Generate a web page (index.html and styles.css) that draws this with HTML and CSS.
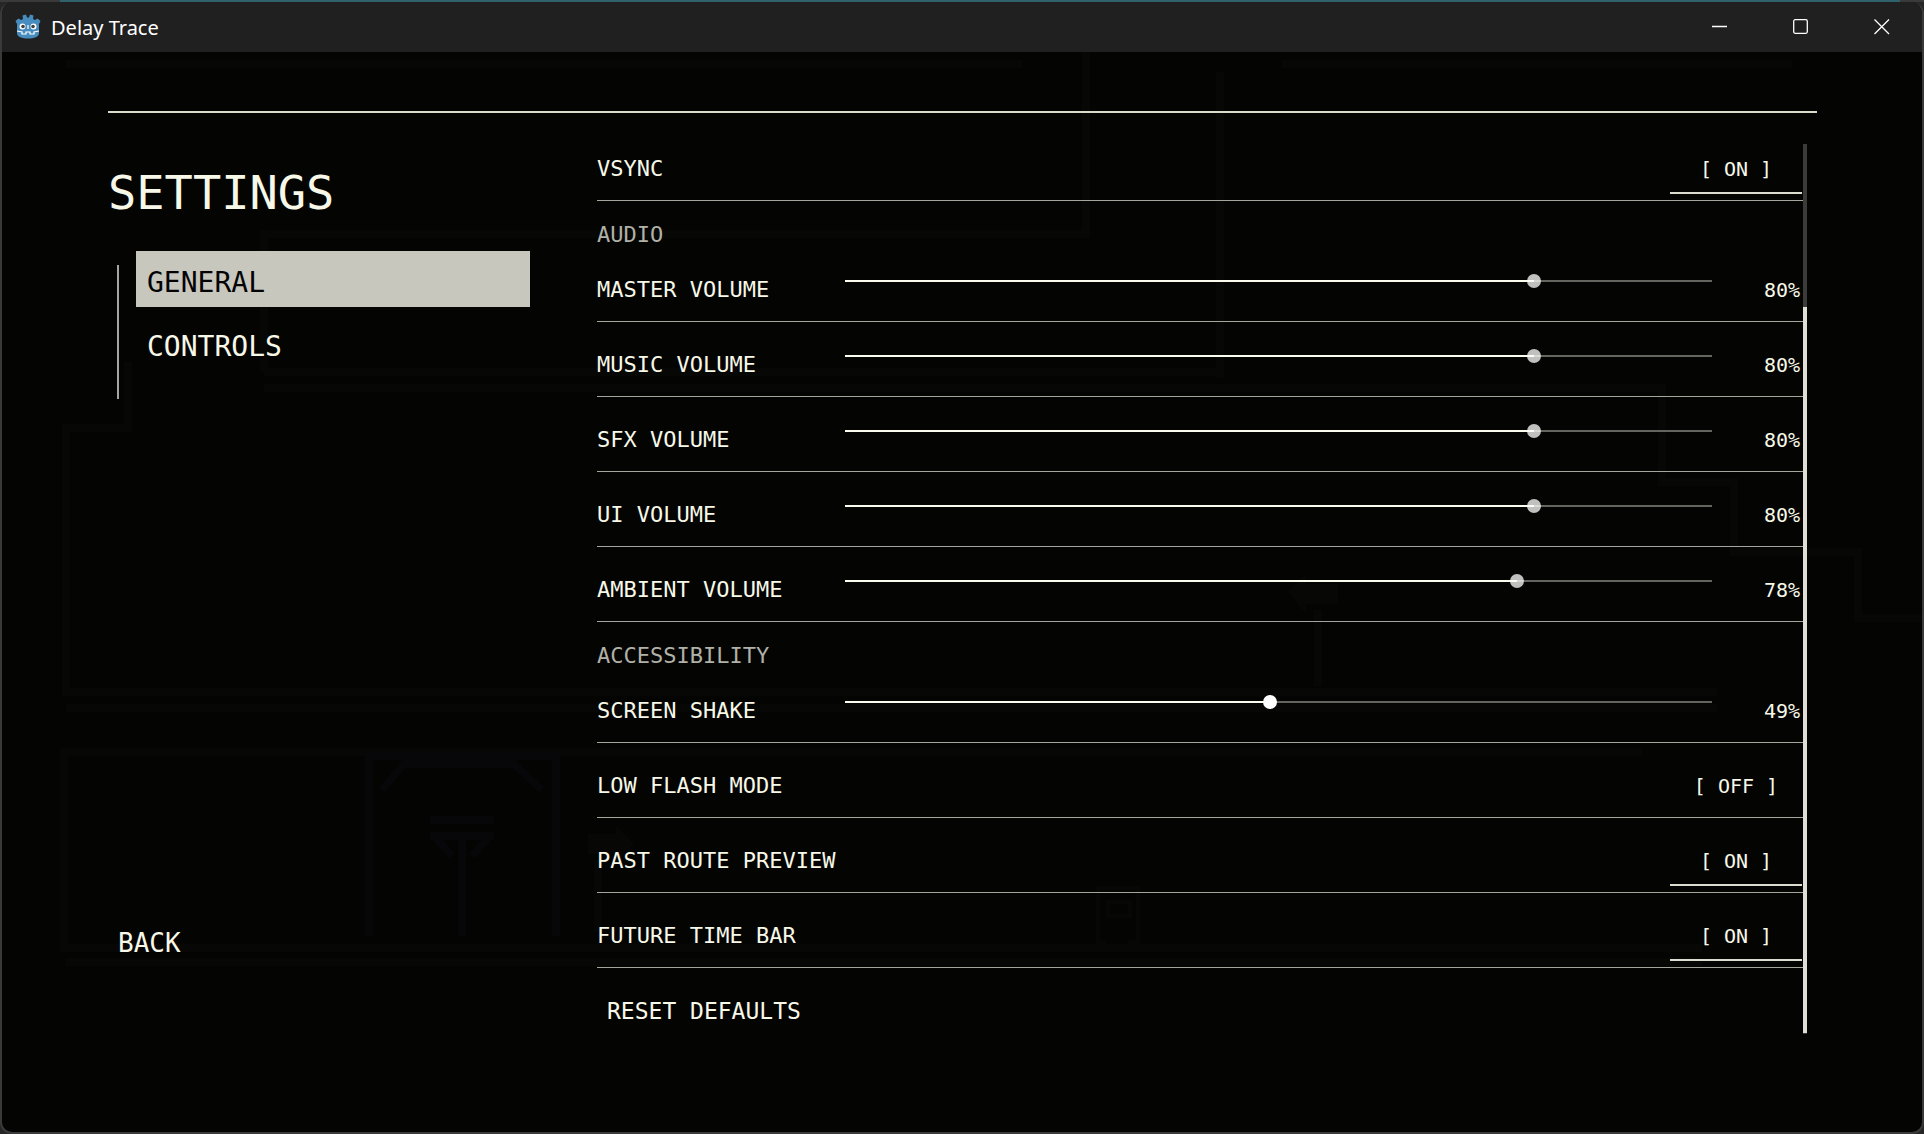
FILE: index.html
```html
<!DOCTYPE html>
<html lang="en">
<head>
<meta charset="utf-8">
<title>Delay Trace</title>
<link rel="stylesheet" href="styles.css">
</head>
<body>
<div class="window">
  <header class="titlebar">
    <svg class="logo" viewBox="0 0 26 26" aria-hidden="true">
      <path fill="#478cbf" d="M.5 7l3-2.500 2.500 1.500 2-1-.5-3.500L11 .5l1 3h2l1-3 3.500 1L18 5l2 1 2.500-1.500 3 2.500-1.500 3v9c0 4-5 5.500-11 5.500S2 23 2 19v-9z"/>
      <path fill="none" stroke="#fff" stroke-width="1.200" d="M2 17l5 1v2h4v-2h4v2h4v-2l5-1M13 11v4"/>
      <circle cx="7.500" cy="12.500" r="3" fill="#fff"/><circle cx="18.500" cy="12.500" r="3" fill="#fff"/>
      <circle cx="8" cy="12.500" r="1.800" fill="#414042"/><circle cx="18" cy="12.500" r="1.800" fill="#414042"/>
    </svg>
    <span class="app-name">Delay Trace</span>
    <div class="window-buttons">
      <button type="button" aria-label="Minimize"><svg viewBox="0 0 16 16"><path d="M0 7.500h15"/></svg></button>
      <button type="button" aria-label="Maximize"><svg viewBox="0 0 16 16"><rect x=".7" y=".7" width="13.600" height="13.600" rx="1.500"/></svg></button>
      <button type="button" aria-label="Close"><svg viewBox="0 0 16 16"><path d="M.5.5l14.500 14.500M15 .5L.5 15"/></svg></button>
    </div>
  </header>
  <div class="game">
    <svg class="level" viewBox="0 0 1920 1080" preserveAspectRatio="xMidYMin slice" aria-hidden="true">
      <g fill="none" stroke="#070706" stroke-width="8">
        <path d="M64 12H1020M1280 12H1790M1084 0V182H262V320M1218 20V326M262 320H1218M262 336H1660V430H1732V500H1856V566H1920"/>
        <path d="M126 310V376H64V640H1715M64 656H1715M62 900V700H1640M64 896H1700M64 910H1700"/>
        <path d="M1316 558V634M596 808V880"/>
      </g>
      <g fill="none" stroke="#07070a" stroke-width="8">
        <path d="M367 884V704H554V884M380 738L402 712H512L540 738M428 768H492M428 784H492M460 784V884M434 786L450 804M486 786L470 804"/>
      </g>
      <path fill="#070706" d="M1286 540l18-18v10h32v20h-32v10zM586 782h28v-8l18 18-18 18v-8h-28z"/>
      <path fill="none" stroke="#070706" stroke-width="4" d="M1096 836h40v54h-8v6h-26v-6h-6zM1106 850h22v14h-22z"/>
    </svg>
    <main class="screen">
      <aside class="sidebar">
        <h1>SETTINGS</h1>
        <nav class="tabs">
          <button type="button" class="tab active">GENERAL</button>
          <button type="button" class="tab">CONTROLS</button>
        </nav>
        <button type="button" class="back">BACK</button>
      </aside>
      <section class="panel">
        <div class="options">
          <div class="row first"><span class="label">VSYNC</span><button type="button" class="toggle on">[ ON ]</button></div>
          <h2>AUDIO</h2>
          <div class="row"><label class="label" for="master">MASTER VOLUME</label><input type="range" id="master" value="80" style="--value:80"><output for="master">80%</output></div>
          <div class="row"><label class="label" for="music">MUSIC VOLUME</label><input type="range" id="music" value="80" style="--value:80"><output for="music">80%</output></div>
          <div class="row"><label class="label" for="sfx">SFX VOLUME</label><input type="range" id="sfx" value="80" style="--value:80"><output for="sfx">80%</output></div>
          <div class="row"><label class="label" for="ui">UI VOLUME</label><input type="range" id="ui" value="80" style="--value:80"><output for="ui">80%</output></div>
          <div class="row"><label class="label" for="ambient">AMBIENT VOLUME</label><input type="range" id="ambient" value="78" style="--value:78"><output for="ambient">78%</output></div>
          <h2>ACCESSIBILITY</h2>
          <div class="row"><label class="label" for="shake">SCREEN SHAKE</label><input type="range" class="focused" id="shake" value="49" style="--value:49"><output for="shake">49%</output></div>
          <div class="row"><span class="label">LOW FLASH MODE</span><button type="button" class="toggle">[ OFF ]</button></div>
          <div class="row"><span class="label">PAST ROUTE PREVIEW</span><button type="button" class="toggle on">[ ON ]</button></div>
          <div class="row"><span class="label">FUTURE TIME BAR</span><button type="button" class="toggle on">[ ON ]</button></div>
          <button type="button" class="reset">RESET DEFAULTS</button>
        </div>
        <div class="scrollbar"><div class="thumb"></div></div>
      </section>
    </main>
  </div>
</div>
</body>
</html>
```
FILE: styles.css
```css
* { box-sizing: border-box; }

body {
  margin: 0;
  min-height: 100vh;
  display: flex;
  background: linear-gradient(90deg, #3a3a3a 60px, #2f626b 60px, #2f626b calc(100% - 24px), #3a3a3a calc(100% - 24px)) top / 100% 2px no-repeat #262626;
  color: #f7f8e8;
  font-family: "DejaVu Sans Mono", "Liberation Mono", monospace;
  font-size: 22px;
}

button {
  margin: 0;
  padding: 0;
  border: 0;
  background: none;
  color: inherit;
  font: inherit;
}

.window {
  flex: 1;
  display: flex;
  flex-direction: column;
  margin-top: 2px;
  border: 2px solid #3a3a3a;
  border-top: 0;
  border-radius: 12px;
  overflow: hidden;
  background: #040403;
}

.titlebar {
  display: flex;
  align-items: center;
  height: 50px;
  padding-left: 13px;
  background: #202020;
  color: #fff;
}

.logo { width: 26px; height: 26px; }

.app-name {
  margin-left: 10px;
  padding-top: 2px;
  font: 20px/28px "Noto Sans", "Open Sans", sans-serif;
}

.window-buttons { display: flex; margin-left: auto; }

.window-buttons button {
  display: flex;
  align-items: center;
  justify-content: center;
  width: 81px;
  height: 50px;
}

.window-buttons svg {
  width: 16px;
  height: 16px;
  fill: none;
  stroke: #fff;
  stroke-width: 1.3;
}

.game {
  flex: 1;
  position: relative;
  display: flex;
}

/* the dimmed level behind the menu */
.level {
  position: absolute;
  inset: 0;
  width: 100%;
  height: 100%;
}

.screen {
  position: relative;
  flex: 1;
  display: grid;
  grid-template-columns: 422px 1fr;
  column-gap: 67px;
  margin: 59px 105px 0 106px;
  border-top: 2px solid #d9dccb;
}

.sidebar {
  display: flex;
  flex-direction: column;
  align-items: flex-start;
  padding-top: 50px;
}

h1 {
  margin: 0;
  font-size: 47px;
  font-weight: 400;
  line-height: 60px;
}

.tabs {
  display: flex;
  flex-direction: column;
  gap: 8px;
  width: 100%;
  height: 148px;
  margin-top: 28px;
  padding-left: 28px;
  background: linear-gradient(#a6a69f, #a6a69f) 9px 100% / 2px 134px no-repeat;
}

.tab {
  height: 56px;
  padding: 8px 11px 0;
  font-size: 28px;
  line-height: 48px;
  text-align: left;
}

.tab.active { background: #c7c7be; color: #030303; }

.back {
  margin-top: 519px;
  margin-left: 10px;
  font-size: 26px;
  line-height: 50px;
}

.panel {
  display: flex;
  height: 890px;
  margin-top: 31px;
  margin-right: 10px;
}

.options { flex: 1; }

.row {
  display: flex;
  align-items: flex-end;
  height: 75px;
  border-bottom: 1px solid #a4a59c;
}

.row.first { height: 57px; }

.label {
  flex: none;
  width: 248px;
  padding-bottom: 16px;
  line-height: 30px;
  white-space: nowrap;
}

h2 {
  height: 46px;
  margin: 0;
  padding-top: 11px;
  color: #b0b1a7;
  font-size: 22px;
  font-weight: 400;
  line-height: 46px;
}

input[type="range"] {
  flex: 1;
  min-width: 0;
  height: 14px;
  margin: 0 0 33px;
  appearance: none;
  background:
    linear-gradient(#fbfcee, #fbfcee) 0 50% / calc(7px + (100% - 14px) * var(--value) / 100) 2px no-repeat,
    linear-gradient(#64655f, #64655f) 0 50% / 100% 2px no-repeat;
}

input[type="range"]::-webkit-slider-thumb {
  appearance: none;
  width: 14px;
  height: 14px;
  border-radius: 50%;
  background: rgba(255, 255, 255, 0.75);
}

input[type="range"].focused::-webkit-slider-thumb { background: #fff; }

output {
  width: 91px;
  padding: 0 3px 16px 0;
  font-size: 20px;
  line-height: 30px;
  text-align: right;
}

.toggle {
  width: 132px;
  height: 50px;
  margin: 0 1px 6px auto;
  padding-top: 2px;
  border-bottom: 2px solid transparent;
  font-size: 20px;
  line-height: 46px;
  white-space: pre;
}

.toggle.on { border-bottom-color: #dcdcd0; }

.reset {
  padding: 20px 10px 0;
  font-size: 23px;
  line-height: 46px;
}

.scrollbar {
  width: 4px;
  padding: 163px 0 1px;
  background: #3b3b39;
}

.thumb { height: 100%; background: #e0dfd5; }
```
